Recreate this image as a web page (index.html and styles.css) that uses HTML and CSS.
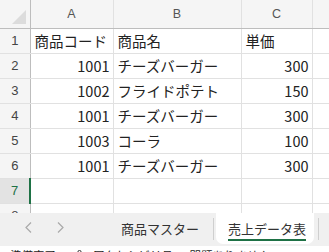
FILE: index.html
```html
<!DOCTYPE html>
<html lang="ja">
<head>
  <meta charset="UTF-8">
  <meta name="viewport" content="width=device-width, initial-scale=1.0">
  <title>売上データ表</title>
  <link rel="stylesheet" href="styles.css">
</head>
<body>
  <div id="book">
    <table class="sheet">
      <colgroup>
        <col class="c-row">
        <col class="c-a">
        <col class="c-b">
        <col class="c-c">
        <col class="c-d">
      </colgroup>
      <tr class="col-head">
        <th class="corner"><span class="tri"></span></th>
        <th>A</th>
        <th>B</th>
        <th>C</th>
        <th></th>
      </tr>
      <tr>
        <th class="row-head">1</th>
        <td>商品コード</td>
        <td>商品名</td>
        <td>単価</td>
        <td></td>
      </tr>
      <tr>
        <th class="row-head">2</th>
        <td class="num">1001</td>
        <td>チーズバーガー</td>
        <td class="num">300</td>
        <td></td>
      </tr>
      <tr>
        <th class="row-head">3</th>
        <td class="num">1002</td>
        <td>フライドポテト</td>
        <td class="num">150</td>
        <td></td>
      </tr>
      <tr>
        <th class="row-head">4</th>
        <td class="num">1001</td>
        <td>チーズバーガー</td>
        <td class="num">300</td>
        <td></td>
      </tr>
      <tr>
        <th class="row-head">5</th>
        <td class="num">1003</td>
        <td>コーラ</td>
        <td class="num">100</td>
        <td></td>
      </tr>
      <tr>
        <th class="row-head">6</th>
        <td class="num">1001</td>
        <td>チーズバーガー</td>
        <td class="num">300</td>
        <td></td>
      </tr>
      <tr class="selected">
        <th class="row-head">7</th>
        <td class="active"></td>
        <td></td>
        <td></td>
        <td></td>
      </tr>
      <tr>
        <th class="row-head">8</th>
        <td></td>
        <td></td>
        <td></td>
        <td></td>
      </tr>
    </table>
  </div>

  <div class="tabs">
    <span class="nav">
      <svg width="7" height="11" viewBox="0 0 7 11"><path d="M6 0.5 L1 5.5 L6 10.5" fill="none" stroke="#a9a9a9" stroke-width="1.2"/></svg>
    </span>
    <span class="nav">
      <svg width="7" height="11" viewBox="0 0 7 11"><path d="M1 0.5 L6 5.5 L1 10.5" fill="none" stroke="#a9a9a9" stroke-width="1.2"/></svg>
    </span>
    <span class="tab">商品マスター</span>
    <span class="sep"></span>
    <span class="tab on"><span class="label">売上データ表</span></span>
    <span class="sep"></span>
  </div>

  <div class="status">
    <span>準備完了</span>
    <span class="acc">
      <svg width="11" height="11" viewBox="0 0 11 11"><circle cx="5.5" cy="2" r="1.6" fill="none" stroke="#333"/><path d="M1 4.5 H10 M5.5 4.5 V8 M3.5 11 L5.5 8 L7.5 11" fill="none" stroke="#333"/></svg>
      アクセシビリティ: 問題ありません
    </span>
  </div>
</body>
</html>
```

FILE: styles.css
```css
*{
  margin: 0;
  padding: 0;
  box-sizing: border-box;
}
body{
  width: 329px;
  height: 252px;
  overflow: hidden;
  background: #fff;
  font-family: "Noto Sans CJK JP", "Noto Sans", sans-serif;
  color: #222;
}
#book{
  height: 213px;
  overflow: hidden;
}
.sheet{
  border-collapse: collapse;
  table-layout: fixed;
  width: 340px;
}
.c-row{ width: 30px; }
.c-a{ width: 83px; }
.c-b{ width: 128px; }
.c-c{ width: 71px; }
.c-d{ width: 28px; }

.sheet td{
  height: 25px;
  border: 1px solid #e1e1e1;
  font-size: 14.5px;
  padding: 0 3px 0 4px;
  white-space: nowrap;
  overflow: hidden;
  line-height: 22px;
}
.sheet td.num{
  text-align: right;
}
.col-head th{
  height: 28px;
  background: #f5f5f5;
  color: #555;
  font-weight: normal;
  font-size: 12.5px;
  font-family: "Liberation Sans", sans-serif;
  border-left: 1px solid #e1e1e1;
  border-bottom: 1px solid #bdbdbd;
}
.col-head th.corner{
  border-left: none;
  border-right: 1px solid #bdbdbd;
  position: relative;
}
.tri{
  position: absolute;
  right: 4px;
  bottom: 4px;
  width: 0;
  height: 0;
  border-left: 14px solid transparent;
  border-bottom: 14px solid #dcdcdc;
}
.row-head{
  background: #f5f5f5;
  color: #444;
  font-weight: normal;
  font-size: 13px;
  font-family: "Liberation Sans", sans-serif;
  border-right: 1px solid #bdbdbd;
  border-bottom: 1px solid #e1e1e1;
  text-align: center;
}
.selected .row-head{
  background: #e3e3e3;
  color: #1e7145;
}
.sheet td.active{
  border-left: 2px solid #1e7145;
}

/* sheet tabs */
.tabs{
  height: 33px;
  background: #f0f0f0;
  display: flex;
  align-items: stretch;
  font-size: 13px;
}
.nav{
  display: flex;
  align-items: center;
  padding-bottom: 4px;
  margin-left: 25px;
}
.tab{
  display: flex;
  align-items: center;
  padding: 0 14px 2px 0;
  margin-left: 57px;
  color: #333;
}
.tab.on{
  margin-left: 2px;
  background: #fff;
  padding: 0 8px 0 12px;
  border-radius: 0 0 7px 7px;
  margin-bottom: 2px;
}
.tab.on .label{
  border-bottom: 2px solid #1e7145;
  padding: 2px 0 1px;
}
.sep{
  width: 1px;
  background: #cfcfcf;
  margin: 5px 0 6px;
}
.tab.on + .sep{
  margin-left: 4px;
}

/* status bar */
.status{
  height: 20px;
  background: #fff;
  font-size: 11.5px;
  padding: 1px 0 0 10px;
  color: #222;
  display: flex;
  gap: 18px;
  white-space: nowrap;
}
.acc{
  display: flex;
  gap: 8px;
}
.acc svg{
  margin-top: 3px;
}
```
